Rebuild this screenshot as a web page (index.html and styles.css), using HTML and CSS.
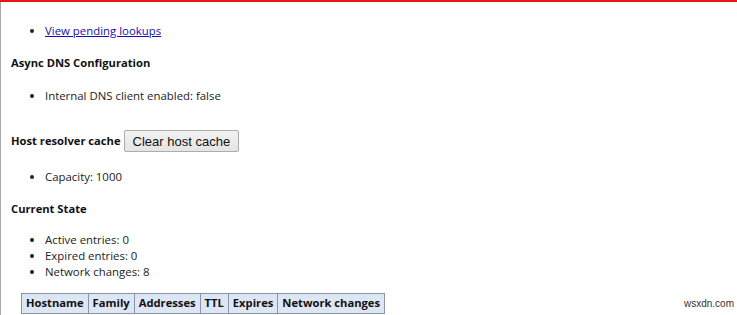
FILE: index.html
```html
<!DOCTYPE html>
<html lang="en">
<head>
    <meta charset="UTF-8">
    <title>net-internals DNS</title>
    <link rel="stylesheet" href="styles.css">
</head>
<body>
    <div class="top-bar"></div>
    <div class="page">
        <ul class="links">
            <li><a href="#">View pending lookups</a></li>
        </ul>

        <h4>Async DNS Configuration</h4>
        <ul>
            <li>Internal DNS client enabled: false</li>
        </ul>

        <div class="cache-row">
            <h4>Host resolver cache</h4>
            <button type="button">Clear host cache</button>
        </div>
        <ul class="capacity">
            <li>Capacity: 1000</li>
        </ul>

        <h4>Current State</h4>
        <ul class="state">
            <li>Active entries: 0</li>
            <li>Expired entries: 0</li>
            <li>Network changes: 8</li>
        </ul>

        <table class="cache-table">
            <thead>
                <tr>
                    <th>Hostname</th>
                    <th>Family</th>
                    <th>Addresses</th>
                    <th>TTL</th>
                    <th>Expires</th>
                    <th>Network changes</th>
                </tr>
            </thead>
        </table>
    </div>
    <div class="watermark">wsxdn.com</div>
</body>
</html>
```

FILE: styles.css
```css
html, body {
    margin: 0;
    padding: 0;
    background-color: #fff;
    height: 100%;
}
body {
    font-family: "Open Sans", "Noto Sans", sans-serif;
    font-size: 11.4px;
    line-height: 16px;
    color: #222;
    overflow: hidden;
}
.top-bar {
    height: 2px;
    background-color: #e8141b;
}
.page {
    border-left: 1px solid #a8a8a8;
    padding-left: 10px;
    min-height: 100%;
}
h4 {
    margin: 16px 0 0;
    font-size: 11.2px;
    font-weight: bold;
    color: #111;
}
ul {
    margin: 17px 0 0;
    padding-left: 34px;
}
ul.links {
    margin-top: 0;
    padding-top: 21px;
}
a {
    color: #1a0dab;
}
.cache-row {
    display: flex;
    align-items: center;
    gap: 3px;
    margin-top: 26px;
}
.cache-row h4 {
    margin: 0;
}
button {
    font-family: "Liberation Sans", Arial, sans-serif;
    font-size: 13px;
    height: 22px;
    padding: 0 8px;
    border: 1px solid #acacac;
    border-radius: 2px;
    background: linear-gradient(#f2f2f2, #e4e4e4);
    color: #111;
}
ul.capacity {
    margin-top: 17px;
}
ul.state {
    margin-top: 15px;
}
.cache-table {
    margin: 13px 0 0 10px;
    border-collapse: collapse;
}
.cache-table th {
    background-color: #dde6f4;
    border: 1px solid #8a96a8;
    padding: 1px 4px 2px;
    font-size: 11.2px;
    color: #111;
}
.watermark {
    position: absolute;
    right: 3px;
    bottom: 3px;
    font-family: "Liberation Sans", Arial, sans-serif;
    font-size: 10px;
    color: #333;
}
```
